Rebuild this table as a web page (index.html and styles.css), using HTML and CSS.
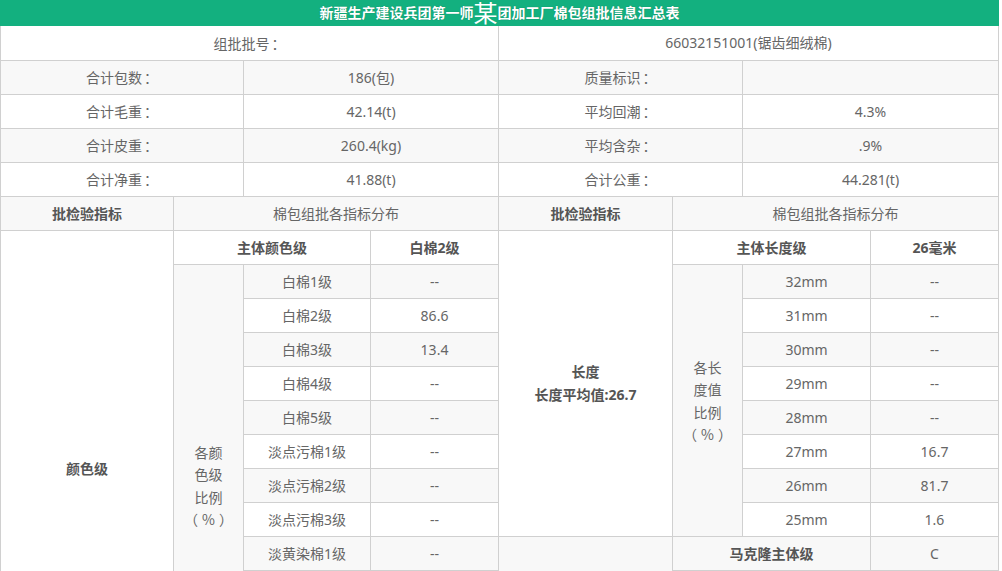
FILE: index.html
```html
<!DOCTYPE html>
<html lang="zh-CN">
<head>
<meta charset="utf-8">
<title>棉包组批信息汇总表</title>
<link rel="stylesheet" href="styles.css">
</head>
<body>
<div class="wrap">
  <div class="title">新疆生产建设兵团第一师<span class="big">某</span>团加工厂棉包组批信息汇总表</div>
  <table class="sheet">
    <colgroup>
      <col class="c1"><col class="c2"><col class="c3"><col class="c4">
      <col class="c5"><col class="c6"><col class="c7"><col class="c8">
    </colgroup>
    <tbody>
      <tr class="first">
        <td colspan="4">组批批号<span class="colon">：</span></td>
        <td colspan="4">66032151001(锯齿细绒棉)</td>
      </tr>
      <tr>
        <td colspan="2">合计包数<span class="colon">：</span></td>
        <td colspan="2">186(包)</td>
        <td colspan="2">质量标识<span class="colon">：</span></td>
        <td colspan="2"></td>
      </tr>
      <tr>
        <td colspan="2">合计毛重<span class="colon">：</span></td>
        <td colspan="2">42.14(t)</td>
        <td colspan="2">平均回潮<span class="colon">：</span></td>
        <td colspan="2">4.3%</td>
      </tr>
      <tr>
        <td colspan="2">合计皮重<span class="colon">：</span></td>
        <td colspan="2">260.4(kg)</td>
        <td colspan="2">平均含杂<span class="colon">：</span></td>
        <td colspan="2">.9%</td>
      </tr>
      <tr>
        <td colspan="2">合计净重<span class="colon">：</span></td>
        <td colspan="2">41.88(t)</td>
        <td colspan="2">合计公重<span class="colon">：</span></td>
        <td colspan="2">44.281(t)</td>
      </tr>
      <tr>
        <td class="b">批检验指标</td>
        <td colspan="3">棉包组批各指标分布</td>
        <td class="b">批检验指标</td>
        <td colspan="3">棉包组批各指标分布</td>
      </tr>
      <tr>
        <td class="b" rowspan="14">颜色级</td>
        <td class="b" colspan="2">主体颜色级</td>
        <td class="b">白棉2级</td>
        <td class="b multi" rowspan="9">长度<br>长度平均值:26.7</td>
        <td class="b" colspan="2">主体长度级</td>
        <td class="b">26毫米</td>
      </tr>
      <tr>
        <td class="multi cjk" rowspan="13">各颜<br>色级<br>比例<br>（<span class="pct">%</span>）</td>
        <td>白棉1级</td><td>--</td>
        <td class="multi cjk" rowspan="8">各长<br>度值<br>比例<br>（<span class="pct">%</span>）</td>
        <td>32mm</td><td>--</td>
      </tr>
      <tr><td>白棉2级</td><td>86.6</td><td>31mm</td><td>--</td></tr>
      <tr><td>白棉3级</td><td>13.4</td><td>30mm</td><td>--</td></tr>
      <tr><td>白棉4级</td><td>--</td><td>29mm</td><td>--</td></tr>
      <tr><td>白棉5级</td><td>--</td><td>28mm</td><td>--</td></tr>
      <tr><td>淡点污棉1级</td><td>--</td><td>27mm</td><td>16.7</td></tr>
      <tr><td>淡点污棉2级</td><td>--</td><td>26mm</td><td>81.7</td></tr>
      <tr><td>淡点污棉3级</td><td>--</td><td>25mm</td><td>1.6</td></tr>
      <tr>
        <td>淡黄染棉1级</td><td>--</td>
        <td class="b" rowspan="5">马克隆值</td>
        <td class="b" colspan="2">马克隆主体级</td>
        <td>C</td>
      </tr>
      <tr><td>淡黄染棉2级</td><td>--</td><td class="multi cjk" rowspan="4">各级<br>比例<br>（<span class="pct">%</span>）</td><td>A级</td><td>--</td></tr>
      <tr><td>淡黄染棉3级</td><td>--</td><td>B级</td><td>--</td></tr>
      <tr><td>黄染棉1级</td><td>--</td><td>C级</td><td>--</td></tr>
      <tr><td>黄染棉2级</td><td>--</td><td>平均值</td><td>--</td></tr>
    </tbody>
  </table>
</div>
</body>
</html>
```

FILE: styles.css
```css
html, body {
  margin: 0;
  padding: 0;
  overflow: hidden;
  background: #fff;
}

body {
  font-family: "Noto Sans", "Noto Sans CJK SC", sans-serif;
  font-size: 14px;
  color: #666;
}

.wrap {
  width: 999px;
}

.title {
  height: 26px;
  line-height: 26px;
  background: #13b07f;
  color: #fff;
  font-weight: bold;
  font-size: 14px;
  text-align: center;
  white-space: nowrap;
  text-shadow: 0 0 1px rgba(0, 60, 40, 0.45);
}

.title .big {
  font-size: 24px;
  font-weight: normal;
  line-height: 26px;
  vertical-align: top;
  text-shadow: none;
}

.sheet {
  width: 999px;
  border-collapse: collapse;
  table-layout: fixed;
}

.c1 { width: 173px; }
.c2 { width: 70px; }
.c3 { width: 127px; }
.c4 { width: 128px; }
.c5 { width: 174px; }
.c6 { width: 70px; }
.c7 { width: 128px; }
.c8 { width: 128px; }

.sheet td {
  border: 1px solid #d0d0d0;
  height: 33px;
  padding: 0;
  text-align: center;
  vertical-align: middle;
  line-height: 20px;
  white-space: nowrap;
}

.sheet tr.first td {
  border-top: 0;
  height: 34px;
}

.sheet tr:nth-child(even) td {
  background: #f8f8f8;
}

.sheet td.b {
  font-weight: bold;
  color: #555;
}

.sheet td.multi {
  line-height: 22.5px;
}

.sheet td.cjk {
  font-family: "Noto Sans CJK SC", sans-serif;
}

.pct {
  padding: 0 4px;
}

.colon {
  font-family: "Noto Sans CJK TC", sans-serif;
  padding-left: 2px;
}
```
